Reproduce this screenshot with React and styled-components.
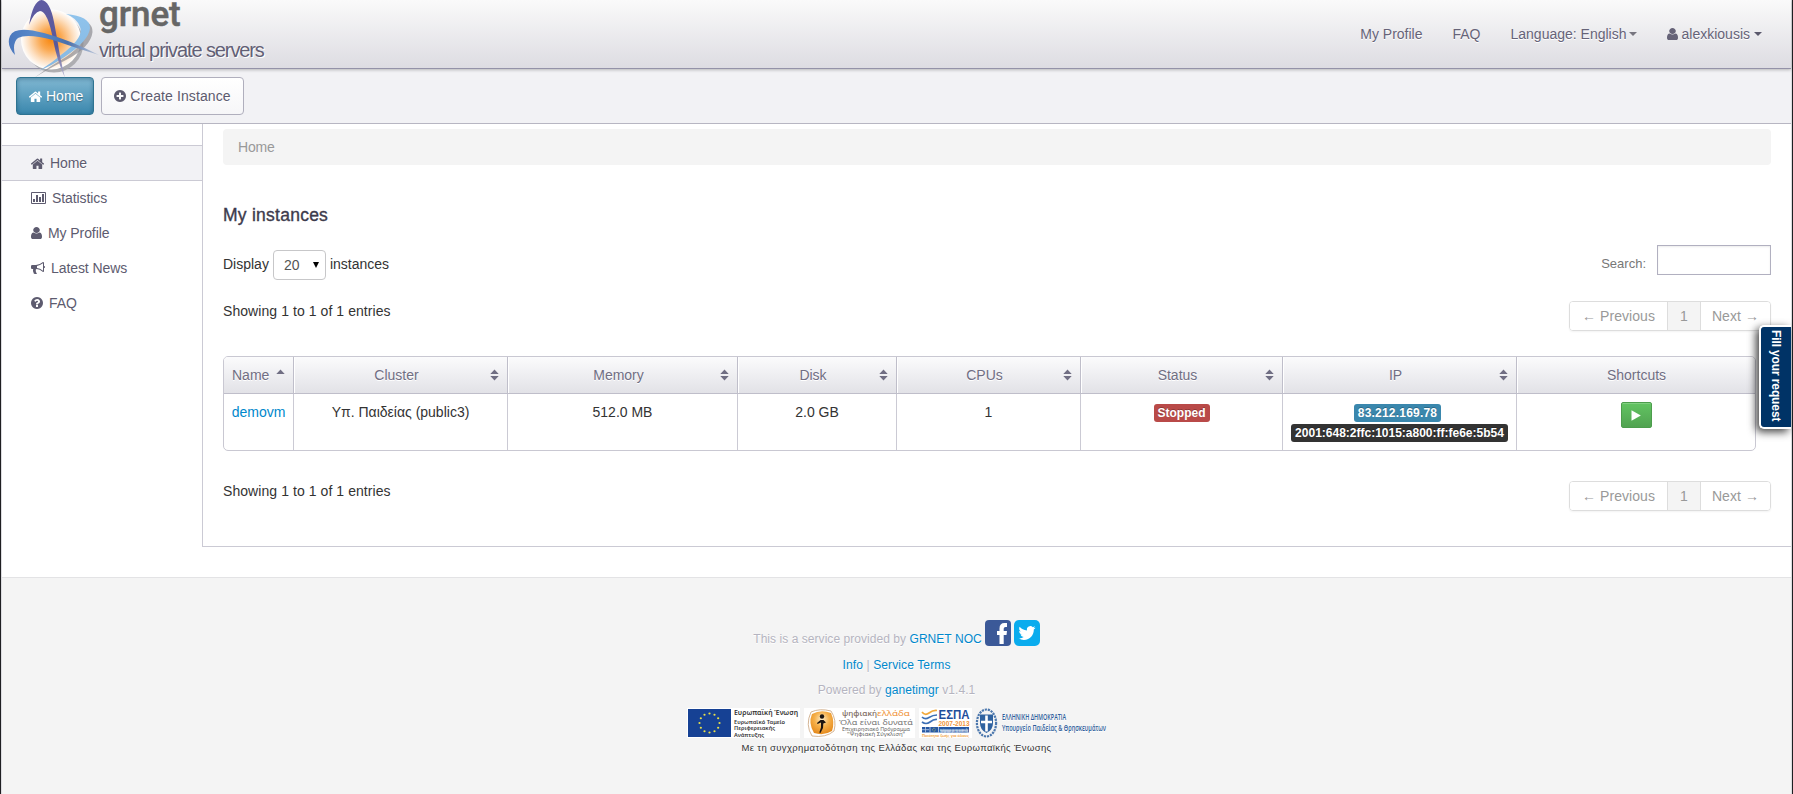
import React from "react";
import styled, { createGlobalStyle, css } from "styled-components";

const GlobalStyle = createGlobalStyle`
  * { box-sizing: border-box; }
  body {
    margin: 0;
    background: #fff;
    color: #333;
    font: 14px/20px "Liberation Sans", Arial, sans-serif;
  }
  a { color: #08c; text-decoration: none; }
`;

/* ---------- icons ---------- */

const disc =
  "M1664 896q0 209-103 385.5t-279.5 279.5-385.5 103-385.5-103-279.5-279.5-103-385.5 103-385.5 279.5-279.5 385.5-103 385.5 103 279.5 279.5 103 385.5z";

const icons = {
  home: {
    w: 13, h: 11, box: "97 190 1598 1346",
    d: "M1472 992v480q0 26-19 45t-45 19h-384v-384h-256v384h-384q-26 0-45-19t-19-45v-480q0-1 .5-3t.5-3l575-474 575 474q1 2 1 6zm223-69l-62 74q-8 9-21 11h-3q-13 0-21-7l-692-577-692 577q-12 8-24 7-13-2-21-11l-62-74q-8-10-7-23.5t11-21.5l719-599q32-26 76-26t76 26l244 204v-195q0-14 9-23t23-9h192q14 0 23 9t9 23v408l219 182q10 8 11 21.5t-7 23.5z",
  },
  chart: {
    w: 15, h: 12, box: "0 0 15 12",
    d: "M1 0h13q1 0 1 1v10q0 1-1 1H1q-1 0-1-1V1q0-1 1-1zM1 1v10h13V1zM2 7h2v3H2zM5 3h2v7H5zM8 5h2v5H8zM11 2h2v8h-2z",
  },
  user: {
    w: 11, h: 12, box: "256 128 1280 1536",
    d: "M1536 1399q0 109-62.5 187t-150.5 78h-854q-88 0-150.5-78t-62.5-187q0-85 8.5-160.5t31.5-152 58.5-131 94-89 134.5-34.5q131 128 313 128t313-128q76 0 134.5 34.5t94 89 58.5 131 31.5 152 8.5 160.5zm-256-887q0 159-112.5 271.5t-271.5 112.5-271.5-112.5-112.5-271.5 112.5-271.5 271.5-112.5 271.5 112.5 112.5 271.5z",
  },
  bullhorn: {
    w: 14, h: 12, box: "0 128 1792 1536",
    d: "M1664 640q53 0 90.5 37.5t37.5 90.5-37.5 90.5-90.5 37.5v384q0 52-38 90t-90 38q-417-347-812-380-58 19-91 66t-31 100.5 40 92.5q-20 33-23 65.5t6 58 33.5 55 48 50 61.5 50.5q-29 58-111.5 83t-168.5 11.5-132-55.5q-7-23-29.5-87.5t-32-94.5-23-89-15-101 3.5-98.5 22-110.5h-122q-66 0-113-47t-47-113v-192q0-66 47-113t113-47h480q435 0 896-384 52 0 90 38t38 90v384zm-128 604v-954q-394 302-768 343v270q377 42 768 341z",
  },
  plus: {
    w: 12, h: 12, box: "128 128 1536 1536",
    d: disc + "M1344 960v-128q0-26-19-45t-45-19h-256v-256q0-26-19-45t-45-19h-128q-26 0-45 19t-19 45v256h-256q-26 0-45 19t-19 45v128q0 26 19 45t45 19h256v256q0 26 19 45t45 19h128q26 0 45-19t19-45v-256h256q26 0 45-19t19-45z",
  },
  question: {
    w: 12, h: 12, box: "128 128 1536 1536",
    d: disc + "M1024 1376v-192q0-14-9-23t-23-9h-192q-14 0-23 9t-9 23v192q0 14 9 23t23 9h192q14 0 23-9t9-23zm256-672q0-88-55.5-163t-138.5-116-170-41q-243 0-371 213-15 24 8 42l132 100q7 6 19 6 16 0 25-12 53-68 86-92 34-24 86-24 48 0 85.500 26t37.500 59q0 38-20 61t-68 45q-63 28-115.500 86.500t-52.500 125.500v36q0 14 9 23t23 9h192q14 0 23-9t9-23q0-19 21.500-49.500t54.500-49.500q32-18 49-28.500t46-35 44.500-48 28-60.500 12.500-81z",
  },
  play: { w: 10, h: 11, box: "0 0 10 11", d: "M0.5 0.3L9.8 5.5L0.5 10.7z" },
  sort: { w: 9, h: 12, box: "0 0 9 12", d: "M0.3 5L4.5 0.6L8.7 5zM0.3 7L4.5 11.4L8.7 7z" },
  sortUp: { w: 9, h: 12, box: "0 0 9 12", d: "M0.3 5L4.5 0.6L8.7 5z" },
};

const IconSvg = styled.svg`
  display: block;
  flex: none;
  fill: currentColor;
`;

const Icon = ({ name }) => {
  const i = icons[name];
  return (
    <IconSvg width={i.w} height={i.h} viewBox={i.box} preserveAspectRatio="none">
      <path d={i.d} fillRule="evenodd" />
    </IconSvg>
  );
};

/* ---------- frame ---------- */

const Window = styled.div`
  height: 794px;
  overflow: hidden;
  border: solid #1f1f22;
  border-width: 0 1px;
`;

const Page = styled.div`
  height: 100%;
  display: flex;
  flex-direction: column;
  position: relative;
  border: solid #dcdce0;
  border-width: 0 1px;
`;

const Header = styled.header`
  position: relative;
  z-index: 2;
  height: 69px;
  flex: none;
  display: flex;
  justify-content: space-between;
  align-items: flex-start;
  padding: 0 29px 0 5px;
  background: linear-gradient(#fafafa, #dddce2);
  border-bottom: 1px solid #9492a8;
  box-shadow: 0 1px 3px rgba(0, 0, 0, 0.25);
`;

const Brand = styled.div`
  display: flex;
  height: 68px;
`;

const BrandText = styled.div`
  display: flex;
  flex-direction: column;
  text-shadow: 1px 1px 0 #fff;
`;

const BrandName = styled.span`
  height: 36px;
  font: 500 35px/30px Roboto, sans-serif;
  letter-spacing: -0.1px;
  color: #666;
  text-shadow: none;
  -webkit-text-stroke: 0.5px #666;
`;

const BrandTagline = styled.span`
  font-size: 20px;
  line-height: 28px;
  letter-spacing: -1.1px;
  color: #625f75;
`;

const TopNav = styled.nav`
  display: flex;
  align-items: center;
  gap: 30px;
  height: 68px;
  color: #666378;
  text-shadow: 0 1px 0 #fff;
`;

const TopLink = styled.span`
  display: flex;
  align-items: center;
  gap: ${(p) => p.$gap || 4}px;
`;

const Caret = styled.i`
  border: 4px solid transparent;
  border-top-color: ${(p) => (p.$dark ? "#5a586c" : "#77757f")};
  border-bottom: 0;
`;

const Toolbar = styled.div`
  height: 55px;
  flex: none;
  display: flex;
  gap: 7px;
  padding: 8px 14px;
  background: #f2f2f5;
  border-bottom: 1px solid #b7b6c2;
`;

const ToolButton = styled.div`
  height: 38px;
  display: flex;
  align-items: center;
  gap: 4px;
  padding: 0 12px;
  border: 1px solid #b0afbd;
  border-radius: 4px;
  color: #5c5a6e;
  background: linear-gradient(#fff, #f6f6f8);
  text-shadow: 0 1px 0 #fff;
  letter-spacing: 0.1px;
  ${(p) =>
    p.$active &&
    css`
      padding-right: 10px;
      letter-spacing: 0;
      border-color: #2e7391;
      color: #fff;
      background: linear-gradient(#80b7d2, #3a87ad);
      box-shadow: inset 0 1px 4px rgba(0, 50, 80, 0.4);
      text-shadow: 0 1px 1px rgba(0, 0, 0, 0.3);
    `}
`;

const Body = styled.div`
  display: flex;
  height: 423px;
  flex: none;
`;

const Sidebar = styled.nav`
  width: 200px;
  flex: none;
  padding-top: 21px;
`;

const SideItem = styled.div`
  height: 35px;
  display: flex;
  align-items: center;
  gap: 6px;
  padding: 0 29px;
  color: #5d5b6f;
  letter-spacing: -0.08px;
  text-shadow: 0 1px 0 #fff;
  ${(p) =>
    p.$active &&
    css`
      height: 36px;
      margin-bottom: -1px;
      background: #f2f2f5;
      border: solid #cbcad4;
      border-width: 1px 0;
    `}
`;

const Main = styled.main`
  flex: 1;
  display: flex;
  flex-direction: column;
  padding: 5px 20px 0;
  border-left: 1px solid #cbcad4;
  border-bottom: 1px solid #cbcad4;
`;

const Breadcrumb = styled.div`
  height: 36px;
  padding: 8px 15px;
  border-radius: 4px;
  background: #f4f4f4;
  color: #999;
  letter-spacing: -0.2px;
`;

const Title = styled.h1`
  margin: 39px 0 0;
  font-size: 17.5px;
  line-height: 22px;
  letter-spacing: 0.25px;
  font-weight: 400;
  color: #3d3b4c;
  -webkit-text-stroke: 0.35px #3d3b4c;
`;

const Row = styled.div`
  display: flex;
  justify-content: space-between;
`;

const Controls = styled(Row)`
  height: 56px;
  margin-top: 19px;
`;

const LengthPicker = styled.div`
  display: flex;
  align-items: flex-start;
  align-self: flex-start;
  gap: 4px;
  padding-top: 5px;
  line-height: 29px;
`;

const Select = styled.div`
  width: 53px;
  height: 30px;
  display: flex;
  align-items: center;
  justify-content: space-between;
  padding: 0 6px 0 10px;
  border: 1px solid #c7c7c9;
  border-radius: 4px;
  color: #555;
`;

const SelectArrow = styled.i`
  border: 3px solid transparent;
  border-top: 6px solid #000;
  border-bottom: 0;
`;

const SearchBox = styled.label`
  display: flex;
  align-items: center;
  align-self: flex-start;
  gap: 11px;
  font-size: 13px;
  letter-spacing: 0;
  color: #777;
  span { padding-top: 7px; }
`;

const SearchInput = styled.input`
  width: 114px;
  height: 30px;
  border: 1px solid #b1b0c0;
  background: #fff;
  box-shadow: inset 0 1px 2px rgba(0, 0, 0, 0.08);
`;

const Pager = styled.div`
  display: flex;
  height: 30px;
  border: 1px solid #ddd;
  border-radius: 4px;
  box-shadow: 0 1px 2px rgba(0, 0, 0, 0.05);
  color: #999;
  overflow: hidden;
`;

const PageCell = styled.span`
  width: ${(p) => p.$w}px;
  line-height: 28px;
  text-align: center;
  white-space: pre;
  background: ${(p) => (p.$current ? "#f4f4f4" : "#fff")};
  & + & { border-left: 1px solid #ddd; }
`;

const Table = styled.div`
  width: 1533px;
  margin-top: 24px;
  border: 1px solid #c9c8d2;
  border-radius: 5px;
  overflow: hidden;
`;

const Grid = styled.div`
  display: grid;
  grid-template-columns: 69px 214px 230px 159px 184px 202px 234px 1fr;
`;

const HeadCell = styled.div`
  height: 37px;
  display: flex;
  align-items: center;
  justify-content: space-between;
  padding: 0 8px;
  background: linear-gradient(#fbfbfc, #e2e2e7);
  border-bottom: 1px solid #bfbeca;
  color: #706e83;
  text-shadow: 0 1px 0 #fff;
  & + & {
    border-left: 1px solid #bfbeca;
    box-shadow: inset 1px 0 0 #fff;
  }
`;

const HeadLabel = styled.span`
  flex: 1;
  padding-left: ${(p) => (p.$left ? 0 : 1)}px;
  text-align: ${(p) => (p.$left ? "left" : "center")};
`;

const Cell = styled.div`
  height: 56px;
  display: flex;
  flex-direction: column;
  align-items: center;
  gap: 2px;
  padding-top: 8px;
  & + & { border-left: 1px solid #cbcad4; }
`;

const badgeColors = { red: "#b94a48", blue: "#3a87ad", dark: "#333" };

const Badge = styled.span`
  height: 18px;
  margin-top: ${(p) => (p.$first ? 2 : 0)}px;
  margin-right: ${(p) => p.$shift || 0}px;
  padding: 0 4px;
  border-radius: 3px;
  background: ${(p) => badgeColors[p.$tone]};
  color: #fff;
  font-size: 12px;
  line-height: 18px;
  font-weight: 700;
  letter-spacing: ${(p) => p.$track || 0}px;
  white-space: nowrap;
  text-shadow: 0 -1px 0 rgba(0, 0, 0, 0.25);
`;

const PlayButton = styled.div`
  width: 31px;
  height: 26px;
  display: flex;
  align-items: center;
  justify-content: center;
  border: 1px solid #4c9d4c;
  border-radius: 2px;
  background: linear-gradient(#62c462, #51a351);
  box-shadow: inset 0 1px 0 rgba(255, 255, 255, 0.2);
  color: #fff;
`;

const FeedbackTab = styled.div`
  position: absolute;
  z-index: 3;
  right: 0;
  top: 325px;
  width: 32px;
  height: 104px;
  padding-top: 3px;
  border: 2px solid #fff;
  border-right: 0;
  border-radius: 5px 0 0 5px;
  background: #036;
  color: #fff;
  font-size: 12px;
  line-height: 30px;
  font-weight: 700;
  letter-spacing: -0.12px;
  writing-mode: vertical-rl;
  box-shadow: -3px 3px 8px rgba(0, 0, 0, 0.75);
`;

const Footer = styled.footer`
  margin-top: 30px;
  flex: 1;
  display: flex;
  flex-direction: column;
  align-items: center;
  padding: 42px 0 0 0;
  background: #f4f4f4;
  border-top: 1px solid #e3e3e5;
  color: #b5b4c0;
  font-size: 12px;
  text-shadow: 0 1px 0 #fff;
`;

const FooterLine = styled.p`
  margin: 0;
  display: flex;
  align-items: flex-end;
  gap: 3px;
  height: ${(p) => p.$h}px;
  letter-spacing: ${(p) => p.$track}px;
  white-space: pre;
  line-height: 14px;
`;

const Logos = styled.div`
  display: flex;
  gap: 4px;
  margin-top: 11px;
  svg { display: block; overflow: visible; }
`;

const Caption = styled.p`
  margin: 2px 0 0;
  color: #333;
  font-size: 9.5px;
  line-height: 16px;
  letter-spacing: 0.36px;
`;

/* ---------- drawings ---------- */

const GrnetMark = () => (
  <svg width="92" height="80" viewBox="7 0 92 80">
    <defs>
      <radialGradient id="globe" cx="50%" cy="50%" r="50%">
        <stop offset="0" stopColor="#f8870f" />
        <stop offset="0.35" stopColor="#faa850" />
        <stop offset="0.75" stopColor="#fde0c2" />
        <stop offset="1" stopColor="#fff" />
      </radialGradient>
      <linearGradient id="sky" x1="0" y1="0" x2="0" y2="1">
        <stop offset="0" stopColor="#8fc3ec" />
        <stop offset="1" stopColor="#86b8e2" />
      </linearGradient>
      <linearGradient id="violet" x1="0" y1="0" x2="0" y2="1">
        <stop offset="0" stopColor="#5f5ca3" />
        <stop offset="0.6" stopColor="#5a5899" />
        <stop offset="1" stopColor="#b9b8d0" />
      </linearGradient>
      <linearGradient id="ocean" x1="0" y1="0" x2="1" y2="0">
        <stop offset="0" stopColor="#4a77bd" />
        <stop offset="0.3" stopColor="#5a8ccb" />
        <stop offset="0.65" stopColor="#4a70ab" />
        <stop offset="1" stopColor="#c4cddd" />
      </linearGradient>
    </defs>
    <circle cx="54" cy="43" r="29.500" fill="#a4a4a8" opacity="0.85" />
    <circle cx="51" cy="39.500" r="30" fill="url(#globe)" />
    <path d="M76 18Q93 21 92.500 32Q91 47 66 60Q48 69 34 78Q50 66 66 57Q86 43 84 31Q82 23 76 18z" fill="#8c8c92" opacity="0.7" />
    <path d="M66 14Q90 16 90 28Q89 41 63 58Q51 66 39 71Q53 62 66 51Q84 36 80 27Q77 18 66 14z" fill="url(#sky)" />
    <path d="M29 25Q33 1 41.500 0Q50 1 54 22L57.500 41Q60 58 65 78Q57 60 53.500 42Q48 11 40 11Q34 12 29 25z" fill="url(#violet)" />
    <path d="M15 55Q6 45 10 36Q15 25 44 33Q70 40 99 55Q76 48 53 40Q27 33 18 38Q12 43 15 55z" fill="url(#ocean)" />
  </svg>
);

const Facebook = () => (
  <svg width="26" height="26" viewBox="0 0 26 26">
    <rect width="26" height="26" rx="4" fill="#3b5998" />
    <path d="M14.500 24V15H12V11H14.500V8.500Q14.500 3 19.500 3H22V7H20.500Q18.700 7 18.700 8.800V11H22L21.500 15H18.700V24z" fill="#fff" />
  </svg>
);

const Twitter = () => (
  <svg width="26" height="26" viewBox="0 0 26 26">
    <rect width="26" height="26" rx="5" fill="#0aacee" />
    <path
      transform="translate(4.500 4.500) scale(.71)"
      d="M23.950 4.570a10 10 0 0 1-2.820.775 4.960 4.960 0 0 0 2.160-2.720c-.95.550-2 .950-3.120 1.180a4.920 4.920 0 0 0-8.380 4.480C7.690 8.090 4.070 6.130 1.640 3.160a4.820 4.820 0 0 0-.67 2.480c0 1.710.870 3.210 2.190 4.100a4.900 4.900 0 0 1-2.230-.62v.060a4.920 4.920 0 0 0 3.950 4.830 5 5 0 0 1-2.210.085 4.940 4.940 0 0 0 4.600 3.420A9.870 9.870 0 0 1 0 19.540a13.990 13.990 0 0 0 7.550 2.210c9.050 0 14-7.500 14-13.980 0-.21 0-.42-.015-.63a9.940 9.940 0 0 0 2.460-2.550z"
      fill="#fff"
    />
  </svg>
);

const sans = '"Liberation Sans", sans-serif';
const round = '"Noto Sans", sans-serif';

const EuLogo = () => (
  <svg width="113" height="30" viewBox="0 0 113 30">
    <rect width="113" height="30" fill="#fff" />
    <rect x="1" y="1" width="43" height="28" fill="#164194" />
    {Array.from({ length: 12 }, (_, i) => {
      const a = (i * Math.PI) / 6;
      return <circle key={i} cx={22.5 + 10 * Math.sin(a)} cy={15 - 9.5 * Math.cos(a)} r="1.1" fill="#e8e04a" />;
    })}
    <g fontFamily={round} fontWeight="600" fill="#333" fontSize="6">
      <text x="47" y="7" textLength="64" lengthAdjust="spacingAndGlyphs" fontSize="7">Ευρωπαϊκή Ένωση</text>
      <text x="47" y="15.500" textLength="51" lengthAdjust="spacingAndGlyphs">Ευρωπαϊκό Ταμείο</text>
      <text x="47" y="22" textLength="41" lengthAdjust="spacingAndGlyphs">Περιφερειακής</text>
      <text x="47" y="28.500" textLength="30" lengthAdjust="spacingAndGlyphs">Ανάπτυξης</text>
    </g>
  </svg>
);

const DigitalGreeceLogo = () => (
  <svg width="111" height="30" viewBox="0 0 111 30">
    <defs>
      <radialGradient id="amber" cx="50%" cy="35%" r="65%">
        <stop offset="0" stopColor="#fdecc8" />
        <stop offset="0.5" stopColor="#f6b04a" />
        <stop offset="1" stopColor="#e58a1c" />
      </radialGradient>
    </defs>
    <rect width="111" height="30" fill="#fff" />
    <path d="M7 4Q16 0 27 3Q33 12 30 23Q22 30 8 28Q1 17 7 4z" fill="none" stroke="#c9a27a" strokeWidth="0.8" />
    <path d="M8 6Q17 1 27 5Q31 14 28 23Q20 28 10 25Q4 15 8 6z" fill="url(#amber)" />
    <circle cx="18" cy="8.500" r="2.200" fill="#1c1410" />
    <path d="M13 15L16.500 12H19.500L22 14.500L19.300 15.500L19 20L16.500 25L15.300 24.500L17 19.500V14.500L13.500 16z" fill="#1c1410" />
    <g fontFamily={round}>
      <text x="38" y="7.500" textLength="35" lengthAdjust="spacingAndGlyphs" fontSize="7.500" fontWeight="500" fill="#7d6a60">ψηφιακή</text>
      <text x="73" y="7.500" textLength="33" lengthAdjust="spacingAndGlyphs" fontSize="7.500" fill="#f0953c">ελλάδα</text>
      <text x="35" y="16.500" textLength="74" lengthAdjust="spacingAndGlyphs" fontSize="7" fill="#777">Όλα είναι δυνατά</text>
      <text x="38" y="22.500" textLength="68" lengthAdjust="spacingAndGlyphs" fontSize="5" fill="#666">Επιχειρησιακό Πρόγραμμα</text>
      <text x="43" y="28" textLength="58" lengthAdjust="spacingAndGlyphs" fontSize="5" fill="#666">"Ψηφιακή Σύγκλιση"</text>
    </g>
  </svg>
);

const EspaLogo = () => (
  <svg width="53" height="30" viewBox="0 0 53 30">
    <rect width="53" height="30" fill="#fff" />
    <g fill="none" strokeWidth="1.700">
      <path d="M3 4Q6 8 10 5T18 2.500" stroke="#f2a93b" />
      <path d="M3 9Q6 12 10 9.500T18 7" stroke="#3c6fb5" />
      <path d="M3 14Q7 17 11 14T18 11.500" stroke="#3c6fb5" />
    </g>
    <g fontFamily={sans} fontWeight="700">
      <text x="19.500" y="10.500" textLength="31" lengthAdjust="spacingAndGlyphs" fontSize="13" fill="#1f4e9b">ΕΣΠΑ</text>
      <text x="19.500" y="17.500" textLength="31" lengthAdjust="spacingAndGlyphs" fontSize="7.500" fill="#f0953c">2007-2013</text>
      <rect x="3" y="19" width="47" height="5.500" fill="#2557a3" />
      <path d="M3 21.700H10M6.500 19V24.500" stroke="#b9cbe6" strokeWidth="0.8" />
      <circle cx="15" cy="21.700" r="1.500" fill="none" stroke="#e8e04a" strokeWidth="0.7" strokeDasharray="0.7" />
      <path d="M11 19V24.500M19.500 19V24.500" stroke="#fff" strokeWidth="0.6" />
      <text x="21" y="23" textLength="28" lengthAdjust="spacingAndGlyphs" fontSize="3.500" fill="#dfe8f5">πρόγραμμα για την ανάπτυξη</text>
      <text x="3" y="28.500" textLength="47" lengthAdjust="spacingAndGlyphs" fontSize="4" fill="#f0a23c">Ποιότητα ζωής για όλους</text>
    </g>
  </svg>
);

const MinistryLogo = () => (
  <svg width="131" height="30" viewBox="0 0 131 30">
    <ellipse cx="10.500" cy="15" rx="9.600" ry="13.500" fill="none" stroke="#4b77ad" strokeWidth="2.200" strokeDasharray="2.200 0.9" />
    <path d="M4 6.500H17V15Q17 22 10.500 25Q4 22 4 15z" fill="#2f62a0" />
    <path d="M10.500 7.500V23.500M5 14H16" stroke="#fff" strokeWidth="2.600" />
    <g fontFamily='"Open Sans", sans-serif' fontWeight="600" fill="#2c5c9a">
      <text x="26" y="11.500" textLength="64" lengthAdjust="spacingAndGlyphs" fontSize="8.500">ΕΛΛΗΝΙΚΗ ΔΗΜΟΚΡΑΤΙΑ</text>
      <text x="26" y="23" textLength="104" lengthAdjust="spacingAndGlyphs" fontSize="9">Υπουργείο Παιδείας &amp; Θρησκευμάτων</text>
    </g>
  </svg>
);

/* ---------- page ---------- */

const sideItems = [
  ["home", "Home"],
  ["chart", "Statistics"],
  ["user", "My Profile"],
  ["bullhorn", "Latest News"],
  ["question", "FAQ"],
];

const columns = ["Cluster", "Memory", "Disk", "CPUs", "Status", "IP"];

const Pagination = () => (
  <Pager>
    <PageCell $w={97}>← Previous</PageCell>
    <PageCell $w={33} $current>1</PageCell>
    <PageCell $w={70}>Next →</PageCell>
  </Pager>
);

const InfoRow = styled(Row)`
  height: 31px;
  margin-top: ${(p) => p.$top || 0}px;
  letter-spacing: 0.07px;
`;

export default function App() {
  return (
    <Window>
      <GlobalStyle />
      <Page>
        <Header>
          <Brand>
            <GrnetMark />
            <BrandText>
              <BrandName>grnet</BrandName>
              <BrandTagline>virtual private servers</BrandTagline>
            </BrandText>
          </Brand>
          <TopNav>
            <TopLink>My Profile</TopLink>
            <TopLink>FAQ</TopLink>
            <TopLink $gap={2}>Language: English<Caret /></TopLink>
            <TopLink><Icon name="user" />alexkiousis<Caret $dark /></TopLink>
          </TopNav>
        </Header>
        <Toolbar>
          <ToolButton $active><Icon name="home" />Home</ToolButton>
          <ToolButton><Icon name="plus" />Create Instance</ToolButton>
        </Toolbar>
        <Body>
          <Sidebar>
            {sideItems.map(([icon, label]) => (
              <SideItem key={label} $active={label === "Home"}>
                <Icon name={icon} />
                {label}
              </SideItem>
            ))}
          </Sidebar>
          <Main>
            <Breadcrumb>Home</Breadcrumb>
            <Title>My instances</Title>
            <Controls>
              <LengthPicker>
                Display
                <Select>20<SelectArrow /></Select>
                instances
              </LengthPicker>
              <SearchBox><span>Search:</span><SearchInput /></SearchBox>
            </Controls>
            <InfoRow>Showing 1 to 1 of 1 entries<Pagination /></InfoRow>
            <Table>
              <Grid>
                <HeadCell><HeadLabel $left>Name</HeadLabel><Icon name="sortUp" /></HeadCell>
                {columns.map((c) => (
                  <HeadCell key={c}><HeadLabel>{c}</HeadLabel><Icon name="sort" /></HeadCell>
                ))}
                <HeadCell><HeadLabel>Shortcuts</HeadLabel></HeadCell>
              </Grid>
              <Grid>
                <Cell><a>demovm</a></Cell>
                <Cell>Υπ. Παιδείας (public3)</Cell>
                <Cell>512.0 MB</Cell>
                <Cell>2.0 GB</Cell>
                <Cell>1</Cell>
                <Cell><Badge $tone="red" $first>Stopped</Badge></Cell>
                <Cell>
                  <Badge $tone="blue" $first $track={0.2} $shift={4}>83.212.169.78</Badge>
                  <Badge $tone="dark">2001:648:2ffc:1015:a800:ff:fe6e:5b54</Badge>
                </Cell>
                <Cell><PlayButton><Icon name="play" /></PlayButton></Cell>
              </Grid>
            </Table>
            <InfoRow $top={30}>Showing 1 to 1 of 1 entries<Pagination /></InfoRow>
          </Main>
        </Body>
        <Footer>
          <FooterLine $h={26} $track={0.05}>
            <span>This is a service provided by <a>GRNET NOC</a></span>
            <Facebook />
            <Twitter />
          </FooterLine>
          <FooterLine $h={26} $track={0.12}>
            <span><a>Info</a> | <a>Service Terms</a></span>
          </FooterLine>
          <FooterLine $h={25} $track={0.06}>
            <span>Powered by <a>ganetimgr</a> v1.4.1</span>
          </FooterLine>
          <Logos>
            <EuLogo />
            <DigitalGreeceLogo />
            <EspaLogo />
            <MinistryLogo />
          </Logos>
          <Caption>Με τη συγχρηματοδότηση της Ελλάδας και της Ευρωπαϊκής Ένωσης</Caption>
        </Footer>
        <FeedbackTab>Fill your request</FeedbackTab>
      </Page>
    </Window>
  );
}
